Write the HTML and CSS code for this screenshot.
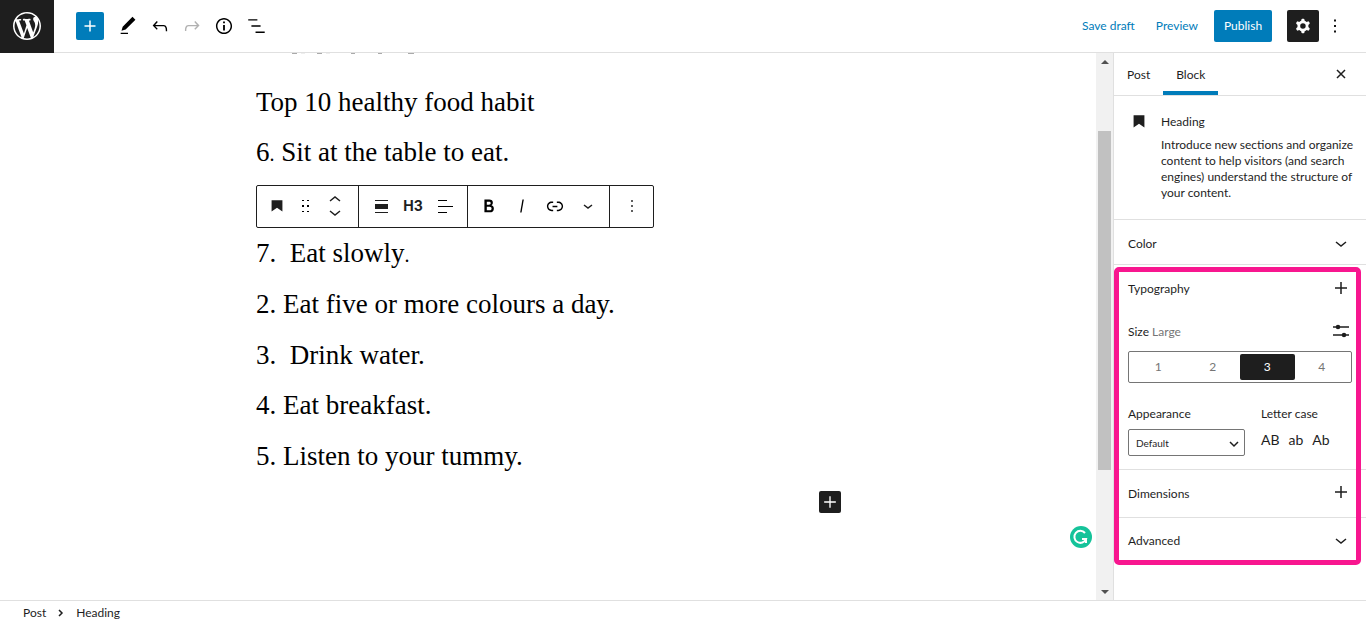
FILE: index.html
```html
<!DOCTYPE html>
<html lang="en">
<head>
    <meta charset="UTF-8">
    <meta name="viewport" content="width=device-width, initial-scale=1.0">
    <title>Edit Post</title>
    <link rel="stylesheet" href="styles.css">
</head>
<body>
<div class="editor">
    <header class="header">
        <a class="site-logo" href="#" aria-label="View posts">
            <svg width="28" height="28" viewBox="0 0 24 24" fill="#fff"><path d="M20 10c0-5.510-4.490-10-10-10C4.480 0 0 4.490 0 10c0 5.520 4.480 10 10 10 5.510 0 10-4.480 10-10zM7.780 15.370L4.370 6.220c.55-.02 1.170-.08 1.170-.08.5-.06.44-1.130-.06-1.110 0 0-1.450.11-2.370.11-.18 0-.37 0-.58-.01C4.120 2.690 6.870 1.110 10 1.110c2.330 0 4.450.87 6.050 2.340-.68-.11-1.650.39-1.650 1.580 0 .74.45 1.360.9 2.100.35.61.55 1.360.55 2.460 0 1.490-1.400 5-1.400 5l-3.030-8.370c.54-.02.82-.17.82-.17.5-.05.44-1.250-.06-1.220 0 0-1.440.12-2.380.12-.87 0-2.330-.12-2.330-.12-.5-.03-.56 1.200-.06 1.220l.92.08 1.260 3.410zM17.410 10c.24-.64.74-1.870.43-4.250.7 1.290 1.050 2.710 1.050 4.250 0 3.290-1.730 6.240-4.400 7.780.97-2.590 1.940-5.200 2.920-7.780zM6.100 18.090C3.120 16.650 1.110 13.530 1.110 10c0-1.300.23-2.480.72-3.590C3.250 10.300 4.670 14.200 6.100 18.090zm4.030-6.630l2.580 6.980c-.86.29-1.760.45-2.710.45-.79 0-1.570-.11-2.290-.33.81-2.380 1.620-4.740 2.420-7.100z" transform="scale(1.2)"/></svg>
        </a>
        <div class="tools">
            <button class="inserter" aria-label="Add block">
                <svg width="22" height="22" viewBox="0 0 24 24" fill="#fff"><path d="M18 11.200h-5.200V6h-1.600v5.200H6v1.600h5.200V18h1.600v-5.200H18z"/></svg>
            </button>
            <button class="icon-btn" aria-label="Tools">
                <svg width="22" height="22" viewBox="0 0 24 24"><path d="M20.100 5.100L16.900 2 6.200 12.700l-1.300 4.400 4.500-1.300L20.100 5.100zM4 20.800h8v-1.500H4v1.500z"/></svg>
            </button>
            <button class="icon-btn" aria-label="Undo">
                <svg width="22" height="22" viewBox="0 0 24 24"><path d="M18.300 11.700c-.6-.6-1.400-.9-2.300-.9H6.700l2.900-3.300-1.100-1-4.500 5L8.500 16l1-1-2.700-2.700H16c.5 0 .9.200 1.300.5 1 1 1 3.400 1 4.500v.3h1.500v-.2c0-1.500 0-4.300-1.500-5.700z"/></svg>
            </button>
            <button class="icon-btn disabled" aria-label="Redo" disabled>
                <svg width="22" height="22" viewBox="0 0 24 24"><path d="M15.600 6.500l-1.100 1 2.900 3.300H8c-.9 0-1.700.3-2.300.9-1.400 1.500-1.400 4.200-1.400 5.600v.2h1.500v-.3c0-1.100 0-3.500 1-4.500.3-.3.7-.5 1.300-.5h9.200L14.500 15l1.100 1.100 4.600-4.600-4.600-5z"/></svg>
            </button>
            <button class="icon-btn" aria-label="Details">
                <svg width="22" height="22" viewBox="0 0 24 24"><path d="M12 3.200c-4.800 0-8.800 3.900-8.800 8.800 0 4.800 3.900 8.800 8.800 8.800 4.800 0 8.800-3.900 8.800-8.800 0-4.800-4-8.800-8.800-8.800zm0 16c-4 0-7.200-3.300-7.200-7.200C4.800 8 8 4.800 12 4.800s7.200 3.300 7.200 7.200c0 4-3.200 7.200-7.200 7.200zM11 17h2v-6h-2v6zm0-8h2V7h-2v2z"/></svg>
            </button>
            <button class="icon-btn" aria-label="List view">
                <svg width="22" height="22" viewBox="0 0 24 24"><path d="M3.500 4.500h10V6h-10zM7 11.200h10v1.500H7zM11.500 18h10v1.500h-10z"/></svg>
            </button>
        </div>
        <div class="actions">
            <button class="link-btn">Save draft</button>
            <button class="link-btn">Preview</button>
            <button class="publish">Publish</button>
            <button class="settings" aria-label="Settings">
                <svg width="22" height="22" viewBox="0 0 24 24" fill="#fff"><path fill-rule="evenodd" d="M10.289 4.836A1 1 0 0111.275 4h1.306a1 1 0 01.987.836l.244 1.466c.787.260 1.503.679 2.108 1.218l1.393-.522a1 1 0 011.216.437l.653 1.130a1 1 0 01-.230 1.273l-1.148.944a6.025 6.025 0 010 2.435l1.149.946a1 1 0 01.230 1.272l-.653 1.130a1 1 0 01-1.216.437l-1.394-.522c-.605.540-1.320.958-2.108 1.218l-.244 1.466a1 1 0 01-.987.836h-1.306a1 1 0 01-.986-.836l-.244-1.466a5.995 5.995 0 01-2.108-1.218l-1.394.522a1 1 0 01-1.217-.436l-.653-1.131a1 1 0 01.230-1.272l1.149-.946a6.026 6.026 0 010-2.435l-1.148-.944a1 1 0 01-.230-1.272l.653-1.131a1 1 0 011.217-.437l1.393.522a5.994 5.994 0 012.108-1.218l.244-1.466zM14.929 12a3 3 0 11-6 0 3 3 0 016 0z"/></svg>
            </button>
            <button class="more" aria-label="Options">
                <svg width="22" height="22" viewBox="0 0 24 24"><path d="M13 19h-2v-2h2v2zm0-6h-2v-2h2v2zm0-6h-2V5h2v2z"/></svg>
            </button>
        </div>
    </header>

    <div class="body">
        <main class="canvas">
            <!-- bottom edge of the title scrolled under the header -->
            <svg class="scrolled-title" width="130" height="1" viewBox="0 0 130 1" fill="#aaa"><path d="M3 0h5v1H3zM28 0h5v1h-5zM62 0h4v1h-4zM89 0h4v1h-4zM119 0h6v1h-6z"/><path fill="#eee" d="M12 0h4v1h-4zM37 0h4v1h-4z"/></svg>
            <div class="post">
                <h3>Top 10 healthy food habit</h3>
                <h3>6<span class="thin">.</span> Sit at the table to eat.</h3>
                <div class="toolbar" role="toolbar" aria-label="Block tools">
                    <div class="group group-block">
                        <button aria-label="Heading"><svg width="20" height="20" viewBox="0 0 24 24" fill="#1e1e1e"><path d="M5.500 5v13.500l6.500-4.500 6.500 4.500V5z"/></svg></button>
                        <button aria-label="Drag"><svg width="20" height="20" viewBox="0 0 20 20"><path d="M6 4h2v1H6zm5 0h2v1h-2zM6 9h2v2H6zm5 0h2v2h-2zM6 15h2v1H6zm5 0h2v1h-2z"/></svg></button>
                        <button aria-label="Move up or down"><svg width="20" height="24" viewBox="0 0 20 24" class="stroke"><path d="M5 7l5-4 5 4M5 17l5 4 5-4"/></svg></button>
                    </div>
                    <div class="group group-format">
                        <button aria-label="Align"><svg width="20" height="20" viewBox="0 0 20 20" fill="#1e1e1e"><path d="M4 4h13v1H4zM4 8h13v5H4zM4 16h13v1H4z"/></svg></button>
                        <button class="level">H3</button>
                        <button aria-label="Align text"><svg width="20" height="20" viewBox="0 0 20 20"><path d="M3 4h9v1H3zM3 10h15v1H3zM3 16h9v1H3z"/></svg></button>
                    </div>
                    <div class="group group-text">
                        <button aria-label="Bold"><svg width="22" height="22" viewBox="0 0 24 24"><path d="M14.700 11.300c1-.6 1.500-1.600 1.500-3 0-2.300-1.300-3.400-4-3.400H7v14h5.800c1.400 0 2.500-.3 3.300-1 .8-.7 1.200-1.700 1.200-2.900.1-1.900-.8-3.100-2.600-3.700zm-5.100-4h2.300c.6 0 1.100.1 1.400.4.300.3.500.7.500 1.200s-.2 1-.5 1.200c-.3.300-.8.400-1.400.4H9.600V7.300zm4.600 9c-.4.300-1 .4-1.700.4H9.600v-3.900h2.900c.7 0 1.300.2 1.700.5.4.3.6.8.6 1.500s-.2 1.200-.6 1.500z"/></svg></button>
                        <button aria-label="Italic"><svg width="22" height="22" viewBox="0 0 24 24"><path d="M12.500 5L10 19h1.500L14 5z"/></svg></button>
                        <button aria-label="Link"><svg width="22" height="22" viewBox="0 0 24 24"><path d="M15.600 7.200H14v1.500h1.600c2 0 3.700 1.700 3.700 3.700s-1.700 3.700-3.700 3.700H14v1.500h1.600c2.800 0 5.200-2.300 5.200-5.200 0-2.900-2.300-5.200-5.200-5.200zM4.700 12.400c0-2 1.700-3.700 3.700-3.700H10V7.200H8.400c-2.900 0-5.200 2.300-5.200 5.200 0 2.900 2.300 5.200 5.200 5.200H10v-1.500H8.400c-2 0-3.700-1.700-3.700-3.700zm4.600.9h5.300v-1.500H9.300v1.500z"/></svg></button>
                        <button aria-label="More"><svg width="22" height="8" viewBox="0 0 22 8" class="stroke"><path d="M7 3l4 3 4-3"/></svg></button>
                    </div>
                    <div class="group group-more">
                        <button aria-label="Options"><svg width="20" height="20" viewBox="0 0 24 24"><path d="M13 19h-2v-2h2v2zm0-6h-2v-2h2v2zm0-6h-2V5h2v2z"/></svg></button>
                    </div>
                </div>
                <h3>7.&nbsp; Eat slowly<span class="thin">.</span></h3>
                <h3>2. Eat five or more colours a day.</h3>
                <h3>3.&nbsp; Drink water.</h3>
                <h3>4. Eat breakfast.</h3>
                <h3>5. Listen to your tummy.</h3>
            </div>
            <div class="appender-row">
                <button class="appender" aria-label="Add block">
                    <svg width="20" height="20" viewBox="0 0 24 24" fill="#fff"><path d="M19 11.200h-6.200V5h-1.600v6.200H5v1.600h6.200V19h1.600v-6.200H19z"/></svg>
                </button>
            </div>
            <button class="grammar" aria-label="Grammar check">
                <svg width="22" height="22" viewBox="0 0 22 22" fill="none" stroke="#fff" stroke-width="2"><circle cx="11" cy="11" r="11" fill="#15c39a" stroke="none"/><path d="M15 7a6 6 0 1 0 1 6h-4M16 12v5"/></svg>
            </button>
        </main>

        <div class="scrollbar">
            <span class="arrow-up"></span>
            <span class="thumb"></span>
            <span class="arrow-down"></span>
        </div>

        <aside class="sidebar">
            <div class="tabs">
                <button class="tab">Post</button>
                <button class="tab active">Block</button>
                <button class="close" aria-label="Close settings">
                    <svg width="12" height="12" viewBox="0 0 12 12" class="stroke"><path d="M2 2l8 8M10 2l-8 8"/></svg>
                </button>
            </div>
            <section class="card">
                <svg width="20" height="20" viewBox="0 0 24 24" fill="#1e1e1e"><path d="M5.500 4v14.500l6.500-4.500 6.500 4.500V4z"/></svg>
                <div>
                    <h2>Heading</h2>
                    <p>Introduce new sections and organize content to help visitors (and search engines) understand the structure of your content.</p>
                </div>
            </section>
            <button class="panel color">Color
                <svg width="12" height="8" viewBox="0 0 12 8" class="stroke"><path d="M1 2l5 4 5-4"/></svg>
            </button>
            <div class="highlight">
                <section class="typography">
                    <div class="row">
                        <h2>Typography</h2>
                        <button class="plus" aria-label="Typography options"><svg width="12" height="12" viewBox="0 0 12 12" class="stroke"><path d="M6 0v12M0 6h12"/></svg></button>
                    </div>
                    <div class="row size-row">
                        <span>Size <span class="muted">Large</span></span>
                        <button class="plus" aria-label="Set custom size"><svg width="16" height="14" viewBox="0 0 16 14" class="stroke"><path d="M0 3h16M0 11h16"/><circle cx="5" cy="3" r="1.500" fill="#1e1e1e"/><circle cx="11" cy="11" r="1.500" fill="#1e1e1e"/></svg></button>
                    </div>
                    <div class="sizes">
                        <button>1</button>
                        <button>2</button>
                        <button class="selected">3</button>
                        <button>4</button>
                    </div>
                    <div class="fields">
                        <div class="field">
                            <label for="appearance">Appearance</label>
                            <div class="select-wrap">
                                <select id="appearance"><option>Default</option></select>
                                <svg width="12" height="8" viewBox="0 0 12 8" class="stroke"><path d="M2 2l4 4 4-4"/></svg>
                            </div>
                        </div>
                        <div class="field">
                            <span>Letter case</span>
                            <div class="cases">
                                <button>AB</button>
                                <button>ab</button>
                                <button>Ab</button>
                            </div>
                        </div>
                    </div>
                </section>
                <button class="panel dimensions">Dimensions
                    <span class="plus"><svg width="12" height="12" viewBox="0 0 12 12" class="stroke"><path d="M6 0v12M0 6h12"/></svg></span>
                </button>
                <button class="panel advanced">Advanced
                    <svg width="12" height="8" viewBox="0 0 12 8" class="stroke"><path d="M1 2l5 4 5-4"/></svg>
                </button>
            </div>
        </aside>
    </div>

    <footer class="footer">
        <a href="#">Post</a>
        <svg width="6" height="8" viewBox="0 0 6 8" class="stroke"><path d="M1 1l3 3-3 3"/></svg>
        <a href="#">Heading</a>
    </footer>
</div>
</body>
</html>
```
FILE: styles.css
```css
* {
    box-sizing: border-box;
}
body {
    margin: 0;
    font-family: Lato, "Open Sans", sans-serif;
    font-size: 12px;
    line-height: 16px;
    color: #1e1e1e;
    background: #fff;
}
button {
    display: flex;
    align-items: center;
    justify-content: center;
    padding: 0;
    border: none;
    background: none;
    font: inherit;
    color: inherit;
    cursor: pointer;
}
svg {
    display: block;
    flex: none;
}
h2, h3, p {
    margin: 0;
    font-weight: 400;
}
a {
    color: inherit;
    text-decoration: none;
}
.stroke {
    fill: none;
    stroke: #1e1e1e;
    stroke-width: 1.5;
}
.editor {
    display: flex;
    flex-direction: column;
    height: 100vh;
    overflow: hidden;
}

/* Header */
.header {
    display: flex;
    align-items: center;
    flex: none;
    height: 53px;
    border-bottom: 1px solid #e0e0e0;
}
.site-logo {
    display: flex;
    align-items: center;
    justify-content: center;
    width: 54px;
    height: 53px;
    background: #1e1e1e;
}
.tools {
    display: flex;
    align-items: center;
    gap: 10px;
    margin-left: 22px;
    height: 50px;
}
.inserter {
    width: 28px;
    height: 28px;
    margin-right: 3px;
    border-radius: 2px;
    background: #007cba;
}
.disabled {
    opacity: 0.3;
}
.actions {
    display: flex;
    align-items: center;
    height: 50px;
    margin-left: auto;
    padding-right: 20px;
}
.link-btn {
    margin-right: 21px;
    color: #007cba;
}
.publish {
    width: 58px;
    height: 32px;
    margin-left: -5px;
    border-radius: 2px;
    background: #007cba;
    color: #fff;
}
.settings {
    width: 32px;
    height: 32px;
    margin: 0 5px 0 15px;
    border-radius: 2px;
    background: #1e1e1e;
}

/* Canvas */
.body {
    display: flex;
    flex: 1;
    min-height: 0;
}
.canvas {
    position: relative;
    flex: 1;
    padding: 24px 255px 0 256px;
}
.scrolled-title {
    position: absolute;
    top: 0;
    left: 289px;
}
.post {
    display: grid;
    grid-template-rows: repeat(8, 1fr);
    align-items: center;
    height: 404px;
}
.post h3 {
    font-family: "Liberation Serif", serif;
    font-size: 27px;
    line-height: 34px;
    color: #000;
    white-space: nowrap;
}
.thin {
    font-size: 20px;
}
.toolbar {
    display: flex;
    align-self: end;
    justify-self: start;
    height: 43px;
    margin-bottom: 1px;
    border: 1px solid #1e1e1e;
    border-radius: 2px;
}
.group {
    display: flex;
    align-items: center;
    justify-content: center;
}
.group + .group {
    border-left: 1px solid #1e1e1e;
}
.group-block {
    gap: 9px;
    width: 101px;
    padding-right: 4px;
}
.group-format {
    gap: 12px;
    width: 109px;
}
.group-text {
    gap: 11px;
    width: 142px;
}
.group-more {
    width: 44px;
}
.level {
    font-family: Inter, sans-serif;
    font-size: 14px;
    font-weight: 700;
}
.appender-row {
    display: flex;
    justify-content: flex-end;
    padding-top: 10px;
}
.appender {
    width: 22px;
    height: 22px;
    border-radius: 2px;
    background: #1e1e1e;
}
.grammar {
    position: absolute;
    right: 4px;
    bottom: 52px;
}

/* Scrollbar */
.scrollbar {
    display: flex;
    flex-direction: column;
    align-items: center;
    width: 17px;
    padding: 7px 0 6px;
    background: #f1f1f1;
}
.arrow-up, .arrow-down {
    border: 4px solid transparent;
}
.arrow-up {
    border-top: none;
    border-bottom-color: #505050;
}
.arrow-down {
    margin-top: auto;
    border-bottom: none;
    border-top-color: #505050;
}
.thumb {
    width: 13px;
    height: 339px;
    margin-top: 67px;
    background: #c1c1c1;
}

/* Sidebar */
.sidebar {
    width: 253px;
    border-left: 1px solid #e0e0e0;
}
.tabs {
    display: flex;
    height: 43px;
    border-bottom: 1px solid #e0e0e0;
}
.tab {
    padding: 2px 13px 0;
}
.tab.active {
    border-bottom: 4px solid #007cba;
    padding-top: 6px;
}
.close {
    margin-left: auto;
    padding-right: 19px;
}
.card {
    display: flex;
    gap: 12px;
    height: 124px;
    padding: 16px 12px 0 15px;
    border-bottom: 1px solid #e0e0e0;
}
.card h2 {
    font-size: 12px;
    line-height: 20px;
    margin-bottom: 5px;
}
.panel {
    justify-content: space-between;
    width: 100%;
    padding: 0 19px 0 14px;
}
.color {
    height: 45px;
    padding-top: 4px;
    border-bottom: 1px solid #e0e0e0;
}
.highlight {
    position: relative;
}
.highlight::after {
    content: "";
    position: absolute;
    inset: 2px 5px -1px 0;
    border: 5px solid #f8168f;
    border-radius: 5px;
    pointer-events: none;
}
.typography {
    height: 205px;
    padding: 14px 14px 0;
    border-bottom: 1px solid #e0e0e0;
}
.row {
    display: flex;
    align-items: center;
    justify-content: space-between;
    height: 20px;
    padding-right: 5px;
}
.row h2 {
    font-size: 12px;
}
.plus {
    padding-bottom: 3px;
}
.size-row {
    margin-top: 23px;
    padding-right: 3px;
}
.muted {
    color: #757575;
}
.sizes {
    display: grid;
    grid-template-columns: repeat(4, 1fr);
    height: 32px;
    margin-top: 9px;
    padding: 2px;
    border: 1px solid #757575;
    border-radius: 2px;
}
.sizes button {
    color: #757575;
}
.sizes .selected {
    border-radius: 2px;
    background: #1e1e1e;
    color: #fff;
}
.fields {
    display: flex;
    gap: 16px;
    margin-top: 23px;
}
.field label {
    display: block;
}
.select-wrap {
    position: relative;
    margin-top: 7px;
}
.select-wrap svg {
    position: absolute;
    right: 5px;
    top: 11px;
    pointer-events: none;
}
select {
    appearance: none;
    display: block;
    width: 117px;
    height: 27px;
    padding: 0 7px;
    border: 1px solid #757575;
    border-radius: 2px;
    background: #fff;
    color: #1e1e1e;
    font-family: inherit;
    font-size: 10px;
}
.cases {
    display: flex;
    gap: 9px;
    margin-top: 10px;
    font-size: 14px;
}
.dimensions {
    height: 48px;
    border-bottom: 1px solid #e0e0e0;
}
.advanced {
    height: 46px;
    margin-bottom: 1px;
}

/* Footer */
.footer {
    display: flex;
    align-items: center;
    gap: 12px;
    flex: none;
    height: 20px;
    padding: 4px 23px 0;
    border-top: 1px solid #e0e0e0;
}
```
